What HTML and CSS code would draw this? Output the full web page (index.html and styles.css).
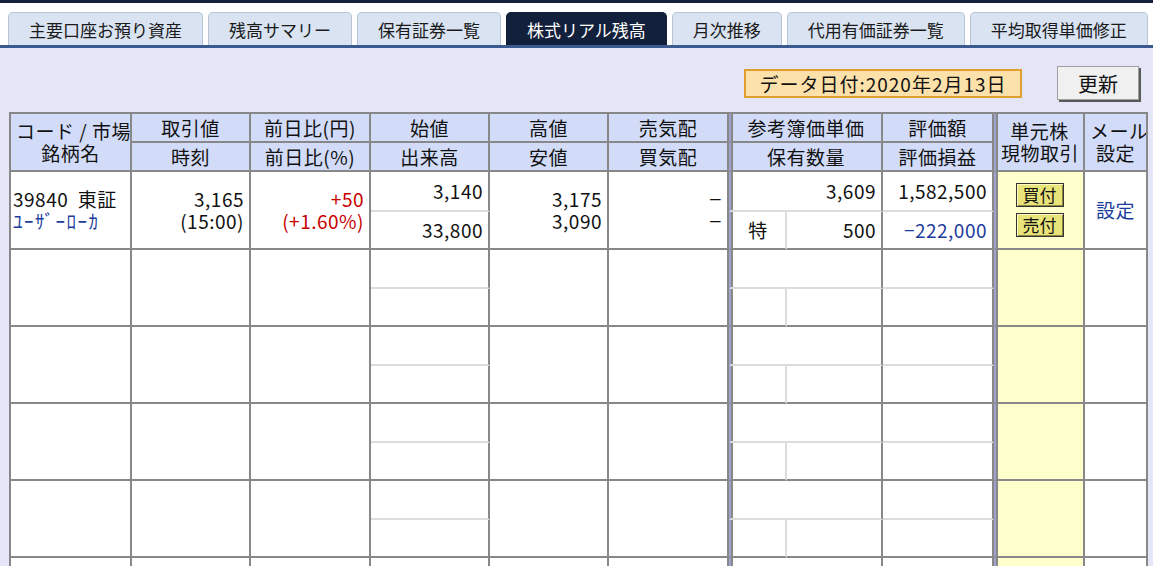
FILE: index.html
```html
<!DOCTYPE html>
<html lang="ja">
<head>
    <meta charset="UTF-8">
    <title>株式リアル残高</title>
    <link rel="stylesheet" href="styles.css">
</head>
<body>
    <div class="tabs">
        <div class="tab">主要口座お預り資産</div>
        <div class="tab">残高サマリー</div>
        <div class="tab">保有証券一覧</div>
        <div class="tab active">株式リアル残高</div>
        <div class="tab">月次推移</div>
        <div class="tab">代用有価証券一覧</div>
        <div class="tab">平均取得単価修正</div>
    </div>

    <div class="main">
        <div class="toolbar">
            <div class="date-box">データ日付:2020年2月13日</div>
            <button class="refresh">更新</button>
        </div>

        <table class="stocks">
            <colgroup>
                <col style="width:121px"><col style="width:119px"><col style="width:120px">
                <col style="width:119px"><col style="width:119px"><col style="width:120px">
                <col style="width:58px"><col style="width:96px"><col style="width:111px">
                <col style="width:91px"><col style="width:63px">
            </colgroup>
            <tr class="head">
                <th rowspan="2">コード / 市場<br>銘柄名</th>
                <th>取引値</th>
                <th>前日比(円)</th>
                <th>始値</th>
                <th>高値</th>
                <th>売気配</th>
                <th colspan="2" class="sep">参考簿価単価</th>
                <th>評価額</th>
                <th rowspan="2" class="sep">単元株<br>現物取引</th>
                <th rowspan="2">メール<br>設定</th>
            </tr>
            <tr class="head">
                <th>時刻</th>
                <th>前日比(%)</th>
                <th>出来高</th>
                <th>安値</th>
                <th>買気配</th>
                <th colspan="2" class="sep">保有数量</th>
                <th>評価損益</th>
            </tr>

            <!-- 保有銘柄 -->
            <tr class="sub-top">
                <td rowspan="2" class="name">39840&nbsp; 東証<br><span class="link kana">ﾕｰｻﾞｰﾛｰｶ</span></td>
                <td rowspan="2" class="num">3,165<br>(15:00)</td>
                <td rowspan="2" class="num up">+50<br>(+1.60%)</td>
                <td class="num half">3,140</td>
                <td rowspan="2" class="num">3,175<br>3,090</td>
                <td rowspan="2" class="num"><span class="dash">&minus;</span><br><span class="dash">&minus;</span></td>
                <td colspan="2" class="num sep half">3,609</td>
                <td class="num half">1,582,500</td>
                <td rowspan="2" class="sep trade">
                    <button class="order">買付</button>
                    <button class="order">売付</button>
                </td>
                <td rowspan="2" class="mail"><span class="link">設定</span></td>
            </tr>
            <tr class="sub-bot">
                <td class="num">33,800</td>
                <td class="sep mark">特</td>
                <td class="num">500</td>
                <td class="num loss">&minus;222,000</td>
            </tr>

            <!-- 空行 -->
            <tr class="empty-top">
                <td rowspan="2"></td><td rowspan="2"></td><td rowspan="2"></td>
                <td class="half"></td><td rowspan="2"></td><td rowspan="2"></td>
                <td colspan="2" class="sep half"></td><td class="half"></td>
                <td rowspan="2" class="sep trade"></td><td rowspan="2"></td>
            </tr>
            <tr class="empty-bot">
                <td></td><td class="sep mark"></td><td></td><td></td>
            </tr>
            <tr class="empty-top">
                <td rowspan="2"></td><td rowspan="2"></td><td rowspan="2"></td>
                <td class="half"></td><td rowspan="2"></td><td rowspan="2"></td>
                <td colspan="2" class="sep half"></td><td class="half"></td>
                <td rowspan="2" class="sep trade"></td><td rowspan="2"></td>
            </tr>
            <tr class="empty-bot">
                <td></td><td class="sep mark"></td><td></td><td></td>
            </tr>
            <tr class="empty-top">
                <td rowspan="2"></td><td rowspan="2"></td><td rowspan="2"></td>
                <td class="half"></td><td rowspan="2"></td><td rowspan="2"></td>
                <td colspan="2" class="sep half"></td><td class="half"></td>
                <td rowspan="2" class="sep trade"></td><td rowspan="2"></td>
            </tr>
            <tr class="empty-bot">
                <td></td><td class="sep mark"></td><td></td><td></td>
            </tr>
            <tr class="empty-top">
                <td rowspan="2"></td><td rowspan="2"></td><td rowspan="2"></td>
                <td class="half"></td><td rowspan="2"></td><td rowspan="2"></td>
                <td colspan="2" class="sep half"></td><td class="half"></td>
                <td rowspan="2" class="sep trade"></td><td rowspan="2"></td>
            </tr>
            <tr class="empty-bot">
                <td></td><td class="sep mark"></td><td></td><td></td>
            </tr>
            <tr class="empty-top">
                <td rowspan="2"></td><td rowspan="2"></td><td rowspan="2"></td>
                <td class="half"></td><td rowspan="2"></td><td rowspan="2"></td>
                <td colspan="2" class="sep half"></td><td class="half"></td>
                <td rowspan="2" class="sep trade"></td><td rowspan="2"></td>
            </tr>
            <tr class="empty-bot">
                <td></td><td class="sep mark"></td><td></td><td></td>
            </tr>
        </table>
    </div>
</body>
</html>
```

FILE: styles.css
```css
body {
    margin: 0;
    background: #e4e6f8;
    font-family: "Noto Sans CJK JP", sans-serif;
    color: #111;
    overflow: hidden;
    height: 100vh;
}

/* タブ */
.tabs {
    display: flex;
    gap: 5px;
    padding: 9px 0 0 8px;
    background: #fff;
    border-top: 3px solid #14213d;
    border-bottom: 3px solid #3b5a90;
}
.tab {
    flex: none;
    white-space: nowrap;
    height: 33px;
    box-sizing: border-box;
    padding: 0 20px;
    display: flex;
    align-items: center;
    background: #d9e3f1;
    border: 1px solid #b7c3d6;
    border-bottom: none;
    border-radius: 5px 5px 0 0;
    font-size: 17px;
    color: #1a1a1a;
}
.tab.active {
    background: #13203b;
    border-color: #13203b;
    color: #fff;
}

.main {
    padding-left: 9px;
}
.toolbar {
    display: flex;
    justify-content: flex-end;
    align-items: center;
    gap: 35px;
    padding: 18px 14px 0 0;
}
.date-box {
    width: 278px;
    height: 29px;
    box-sizing: border-box;
    display: flex;
    align-items: center;
    justify-content: center;
    background: #fde1aa;
    border: 2px solid #e0a030;
    font-size: 19px;
    letter-spacing: 1px;
}
.refresh {
    width: 82px;
    height: 34px;
    background: #f0f0f0;
    border: 1px solid #a0a0a0;
    box-shadow: 2px 2px 0 #5a5a5a;
    font-family: inherit;
    font-size: 20px;
    color: #111;
    padding: 0;
}

/* 残高テーブル */
.stocks {
    width: 1139px;
    margin-top: 12px;
    table-layout: fixed;
    border-collapse: separate;
    border-spacing: 0;
    border-top: 2px solid #888;
    border-left: 2px solid #888;
    background: #fff;
    font-size: 19px;
    letter-spacing: 0.5px;
    line-height: 22px;
}
.stocks th,
.stocks td {
    border-right: 2px solid #888;
    border-bottom: 2px solid #888;
    padding: 0 5px;
    overflow: hidden;
    white-space: nowrap;
}
.stocks th {
    background: #d2dcf8;
    font-weight: normal;
    text-align: center;
}
.head {
    height: 29px;
}
.sub-top {
    height: 40px;
}
.sub-bot {
    height: 38px;
}
.empty-top {
    height: 39px;
}
.empty-bot {
    height: 38px;
}
.stocks .half {
    border-bottom: 2px solid #dcdcdc;
}
.stocks .sep {
    border-left: 2px solid #9ea2cc;
    box-shadow: inset 2px 0 0 #888;
}
.stocks .mark {
    border-right: 2px solid #dcdcdc;
    text-align: center;
}
.num {
    text-align: right;
}
.dash {
    display: inline-block;
    transform: scaleX(1.15);
    transform-origin: right center;
}
.stocks .name {
    padding-left: 2px;
}
.kana {
    letter-spacing: 1.5px;
}
.up {
    color: #c80000;
}
.loss {
    color: #1e3c9c;
}
.link {
    color: #1a3c9c;
}
.stocks .trade {
    background: #ffffcc;
    text-align: center;
}
.mail {
    text-align: center;
}
.order {
    display: block;
    margin: 0 auto;
    width: 48px;
    height: 24px;
    padding: 0;
    background: #e8e47a;
    border: 1px solid #333;
    box-shadow: inset 1px 1px 0 #fffbc0, inset -1px -1px 0 #8a8640;
    font-family: inherit;
    font-size: 17px;
    line-height: 20px;
    color: #111;
}
.order + .order {
    margin-top: 6px;
}
```
